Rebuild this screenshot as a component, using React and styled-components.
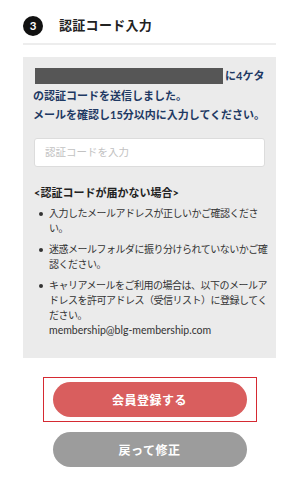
import React from 'react'
import styled, { createGlobalStyle } from 'styled-components'

const GlobalStyle = createGlobalStyle`
  html, body {
    margin: 0;
    padding: 0;
    background: #fff;
  }
  body {
    font-family: Lato, "Noto Sans CJK JP", sans-serif;
    -webkit-font-smoothing: antialiased;
  }
`

const App = () => {
  return (
    <>
      <GlobalStyle />
      <Page>
        <StepHeader>
          <StepNum>3</StepNum>
          <StepTitle>認証コード入力</StepTitle>
        </StepHeader>
        <Divider />

        <Panel>
          <Intro>
            <Masked />に4ケタの認証コードを送信しました。<br />
            メールを確認し15分以内に入力してください。
          </Intro>
          <CodeInput type="text" placeholder="認証コードを入力" />

          <NoteTitle>&lt;認証コードが届かない場合&gt;</NoteTitle>
          <NoteList>
            <NoteItem>
              <Dot />
              <NoteText>入力したメールアドレスが正しいかご確認ください。</NoteText>
            </NoteItem>
            <NoteItem>
              <Dot />
              <NoteText>迷惑メールフォルダに振り分けられていないかご確認ください。</NoteText>
            </NoteItem>
            <NoteItem>
              <Dot />
              <NoteText>
                キャリアメールをご利用の場合は、以下のメールアドレスを許可アドレス（受信リスト）に登録してください。
                <br />
                <Mail>membership@blg-membership.com</Mail>
              </NoteText>
            </NoteItem>
          </NoteList>
        </Panel>

        <Actions>
          <Highlight>
            <PillButton $tone="primary">会員登録する</PillButton>
          </Highlight>
          <PillButton $tone="back">戻って修正</PillButton>
        </Actions>
      </Page>
    </>
  )
}

const Page = styled.div`
  padding: 16px 24px 0 23px;
`

const StepHeader = styled.div`
  display: flex;
  align-items: center;
  gap: 16px;
  height: 19px;
`

const StepNum = styled.span`
  display: flex;
  align-items: center;
  justify-content: center;
  width: 20px;
  height: 20px;
  border-radius: 50%;
  background: #111;
  color: #fff;
  font-size: 11.5px;
  font-weight: 700;
  font-family: Lato, sans-serif;
`

const StepTitle = styled.h2`
  margin: 0;
  font-size: 13px;
  font-weight: 700;
  line-height: 19px;
  color: #222;
  letter-spacing: 0.3px;
`

const Divider = styled.hr`
  margin: 8px 0 0;
  border: none;
  height: 2px;
  background: #ededed;
`

const Panel = styled.section`
  margin-top: 12px;
  background: #ebebeb;
  padding: 9px 7px 20px 10px;
`

const Intro = styled.p`
  margin: 0;
  font-size: 11px;
  font-weight: 700;
  line-height: 19.5px;
  color: #1e3963;
`

const Masked = styled.span`
  display: inline-block;
  width: 188px;
  height: 16px;
  margin-left: 2px;
  margin-right: 2px;
  vertical-align: -4px;
  background: #565656;
`

const CodeInput = styled.input`
  display: block;
  box-sizing: border-box;
  width: 231px;
  height: 29px;
  margin: 13px 0 0 1px;
  padding: 0 10px;
  border: 1px solid #dcdcdc;
  border-radius: 3px;
  background: #fff;
  font-family: inherit;
  font-size: 10.5px;
  outline: none;
  &::placeholder {
    color: #c2c2c2;
  }
`

const NoteTitle = styled.h3`
  margin: 17px 0 0 1px;
  font-size: 11px;
  font-weight: 700;
  line-height: 18px;
  color: #222;
`

const NoteList = styled.ul`
  list-style: none;
  margin: 4px 0 0;
  padding: 0;
  display: flex;
  flex-direction: column;
  gap: 6px;
`

const NoteItem = styled.li`
  display: flex;
  align-items: flex-start;
  gap: 6px;
`

const Dot = styled.span`
  flex: none;
  width: 4px;
  height: 4px;
  margin: 6px 0 0 6px;
  border-radius: 50%;
  background: #333;
`

const NoteText = styled.div`
  flex: 1;
  font-size: 10px;
  line-height: 15px;
  letter-spacing: -0.5px;
  color: #333;
`

const Mail = styled.span`
  letter-spacing: 0;
  font-size: 10.5px;
`

const Actions = styled.div`
  display: flex;
  flex-direction: column;
  align-items: center;
  margin-top: 19px;
  gap: 10px;
`

const Highlight = styled.div`
  border: 1.5px solid #d52a32;
  padding: 4px 9px;
`

const PillButton = styled.button`
  display: block;
  width: 194px;
  height: 35px;
  border: none;
  border-radius: 18px;
  background: ${p => (p.$tone === 'primary' ? '#d95e5e' : '#9c9c9c')};
  color: #fff;
  font-family: Lato, "Noto Sans CJK JP", sans-serif;
  font-size: 12px;
  font-weight: 700;
  letter-spacing: 0.5px;
  cursor: pointer;
`

export default App
